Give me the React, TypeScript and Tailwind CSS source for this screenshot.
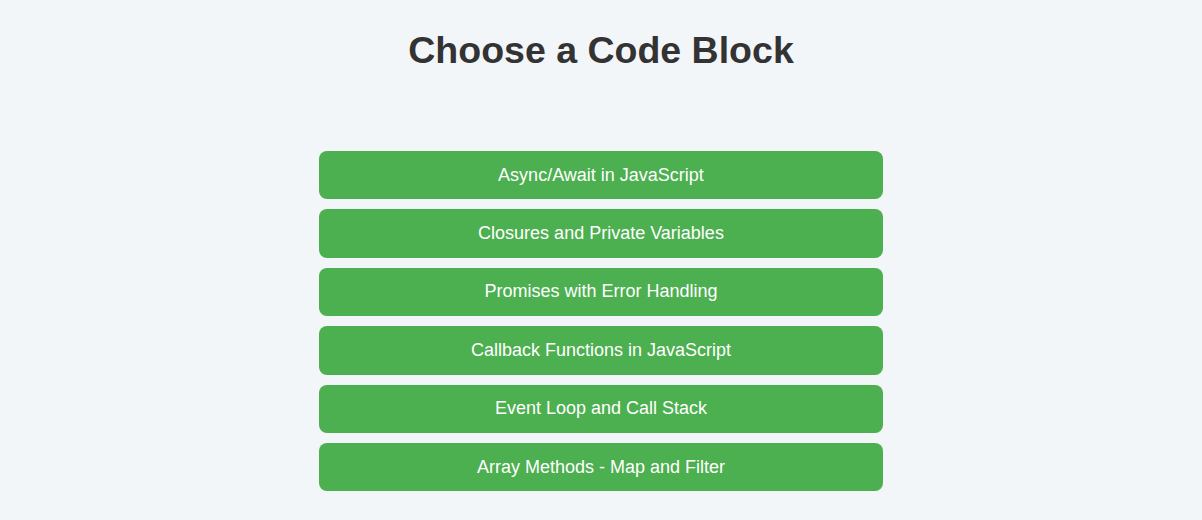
const blocks = [
  "Async/Await in JavaScript",
  "Closures and Private Variables",
  "Promises with Error Handling",
  "Callback Functions in JavaScript",
  "Event Loop and Call Stack",
  "Array Methods - Map and Filter",
];

export default function App() {
  return (
    <div className="min-h-[520px] bg-[#f3f6f9] flex flex-col items-center pt-[29px] font-['Liberation_Sans',Arial,sans-serif]">
      <h1 className="text-[37.5px] leading-[43px] font-bold text-[#333]">Choose a Code Block</h1>

      <div className="mt-[79px] flex flex-col gap-[10px] w-[564px]">
        {blocks.map((b) => (
          <button
            key={b}
            className="h-[48.4px] rounded-[8px] bg-[#4caf50] text-white text-[18px] flex items-center justify-center"
          >
            {b}
          </button>
        ))}
      </div>
    </div>
  );
}
